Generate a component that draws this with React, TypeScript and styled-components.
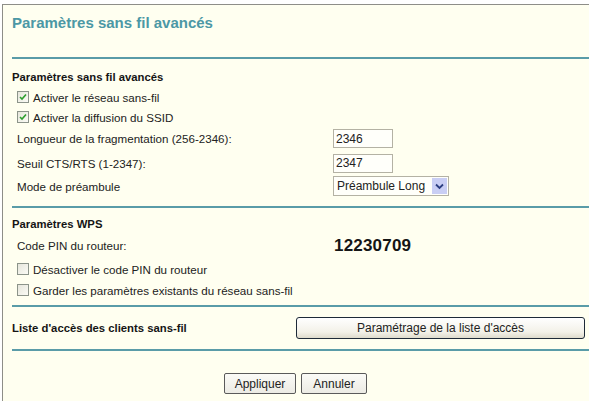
import styled, { createGlobalStyle } from "styled-components";

const GlobalStyle = createGlobalStyle`
  html, body {
    margin: 0;
    padding: 0;
    background: #ffffff;
  }
  body {
    font-family: "Liberation Sans", Arial, sans-serif;
    color: #222;
  }
`;

const Frame = styled.div`
  box-sizing: border-box;
  margin: 4px 0 0 2px;
  width: 587px;
  height: 397px;
  padding-left: 9px;
  background-color: rgb(255, 255, 240);
  border-top: 1px solid #8e8e88;
  border-left: 1px solid #8e8e88;
  overflow: hidden;
`;

const Title = styled.h1`
  box-sizing: border-box;
  margin: 0;
  height: 52px;
  padding-top: 9px;
  font-size: 15px;
  line-height: 18px;
  font-weight: 700;
  color: #4c98a5;
`;

const Rule = styled.div`
  height: 2px;
  background-color: #5a9ca8;
`;

const Section = styled.div<{ $top: number; $bottom: number }>`
  display: flex;
  flex-direction: column;
  padding-top: ${(p) => p.$top}px;
  padding-bottom: ${(p) => p.$bottom}px;
`;

const Row = styled.div<{ $h: number; $indent?: number }>`
  display: flex;
  align-items: center;
  height: ${(p) => p.$h}px;
  padding-left: ${(p) => p.$indent ?? 5}px;
  font-size: 11.6px;
`;

const Header = styled.div`
  font-size: 11.3px;
  font-weight: 700;
  color: #151515;
`;

const Label = styled.span<{ $w: number }>`
  width: ${(p) => p.$w}px;
  flex-shrink: 0;
`;

const Box = styled.span`
  box-sizing: border-box;
  display: inline-flex;
  align-items: center;
  justify-content: center;
  width: 12px;
  height: 12px;
  margin-right: 4px;
  border: 1px solid #8c948a;
  background: linear-gradient(135deg, #e6e6dc, #fbfbf5);
`;

const CheckLabel = styled.span`
  white-space: nowrap;
`;

const TextInput = styled.input`
  box-sizing: border-box;
  width: 60px;
  height: 19px;
  margin: 0;
  padding: 0 2px;
  border: 1px solid #b4b2a4;
  background: #fffffa;
  font-family: "Liberation Sans", Arial, sans-serif;
  font-size: 12px;
  color: #222;
  outline: none;
`;

const FakeSelect = styled.div`
  box-sizing: border-box;
  display: flex;
  align-items: center;
  width: 116px;
  height: 20px;
  border: 1px solid #b4b2a4;
  background: #fffffa;
  font-size: 12px;
  padding-left: 3px;
`;

const SelectText = styled.span`
  flex: 1;
  white-space: nowrap;
`;

const SelectArrow = styled.span`
  display: flex;
  align-items: center;
  justify-content: center;
  width: 15px;
  height: 16px;
  margin-right: 1px;
  background: #c9cef4;
`;

const Pin = styled.span`
  font-size: 17px;
  font-weight: 700;
  letter-spacing: 0.2px;
  color: #151515;
`;

const AccessButton = styled.button`
  box-sizing: border-box;
  width: 289px;
  height: 22px;
  margin: 0;
  border: 1px solid #1e2a38;
  border-radius: 3px;
  background: linear-gradient(#ffffff, #f3f1e8 70%, #dedbcc);
  font-family: "Liberation Sans", Arial, sans-serif;
  font-size: 12px;
  color: #222;
`;

const Footer = styled.div`
  display: flex;
  justify-content: center;
  gap: 5px;
  padding-top: 22px;
  padding-right: 10px;
`;

const Button = styled.button<{ $w: number }>`
  box-sizing: border-box;
  width: ${(p) => p.$w}px;
  height: 21px;
  margin: 0;
  border: 1px solid #5a5a5a;
  border-radius: 2px;
  background: linear-gradient(#fbfbf7, #ecebe4);
  font-family: "Liberation Sans", Arial, sans-serif;
  font-size: 12px;
  color: #222;
`;

const Check = ({ checked }: { checked?: boolean }) => (
  <Box>
    {checked && (
      <svg width="8" height="8" viewBox="0 0 8 8">
        <path d="M1 4 L3 6 L7 1.5" fill="none" stroke="#2e9e2e" strokeWidth="1.6" />
      </svg>
    )}
  </Box>
);

export default function App() {
  return (
    <>
      <GlobalStyle />
      <Frame>
        <Title>Paramètres sans fil avancés</Title>
        <Rule />
        <Section $top={8} $bottom={10}>
          <Row $h={20} $indent={0}>
            <Header>Paramètres sans fil avancés</Header>
          </Row>
          <Row $h={20}>
            <Check checked />
            <CheckLabel>Activer le réseau sans-fil</CheckLabel>
          </Row>
          <Row $h={20}>
            <Check checked />
            <CheckLabel>Activer la diffusion du SSID</CheckLabel>
          </Row>
          <Row $h={23}>
            <Label $w={316}>Longueur de la fragmentation (256-2346):</Label>
            <TextInput readOnly value="2346" />
          </Row>
          <Row $h={26}>
            <Label $w={316}>Seuil CTS/RTS (1-2347):</Label>
            <TextInput readOnly value="2347" />
          </Row>
          <Row $h={20}>
            <Label $w={316}>Mode de préambule</Label>
            <FakeSelect>
              <SelectText>Préambule Long</SelectText>
              <SelectArrow>
                <svg width="9" height="7" viewBox="0 0 9 7">
                  <path d="M1 1.5 L4.5 5 L8 1.5" fill="none" stroke="#2c3e80" strokeWidth="1.8" />
                </svg>
              </SelectArrow>
            </FakeSelect>
          </Row>
        </Section>
        <Rule />
        <Section $top={6} $bottom={6}>
          <Row $h={20} $indent={0}>
            <Header>Paramètres WPS</Header>
          </Row>
          <Row $h={23}>
            <Label $w={317}>Code PIN du routeur:</Label>
            <Pin>12230709</Pin>
          </Row>
          <Row $h={24}>
            <Check />
            <CheckLabel>Désactiver le code PIN du routeur</CheckLabel>
          </Row>
          <Row $h={18}>
            <Check />
            <CheckLabel>Garder les paramètres existants du réseau sans-fil</CheckLabel>
          </Row>
        </Section>
        <Rule />
        <Section $top={10} $bottom={10}>
          <Row $h={22} $indent={0}>
            <Label $w={284}>
              <Header>Liste d'accès des clients sans-fil</Header>
            </Label>
            <AccessButton>Paramétrage de la liste d'accès</AccessButton>
          </Row>
        </Section>
        <Rule />
        <Footer>
          <Button $w={72}>Appliquer</Button>
          <Button $w={66}>Annuler</Button>
        </Footer>
      </Frame>
    </>
  );
}
